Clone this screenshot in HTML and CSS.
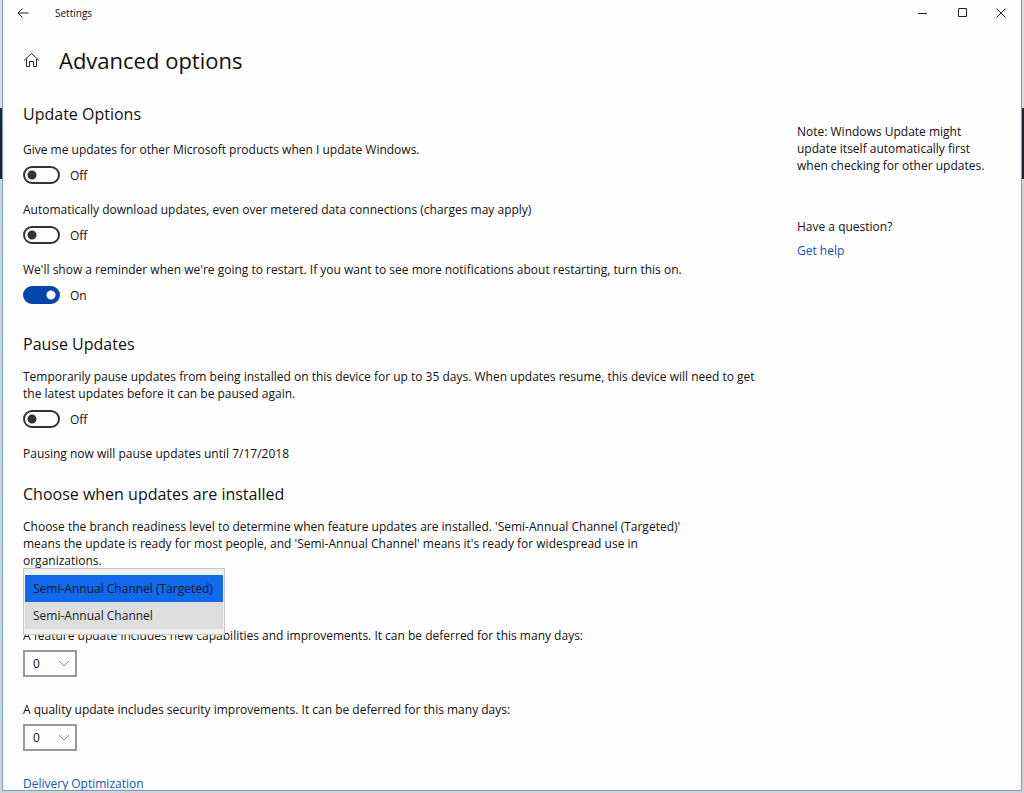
FILE: index.html
```html
<!DOCTYPE html>
<html lang="en">
<head>
<meta charset="utf-8">
<meta name="viewport" content="width=device-width, initial-scale=1">
<title>Settings</title>
<link rel="stylesheet" href="styles.css">
</head>
<body>
<div class="desktop">
  <div class="window">
    <header class="titlebar">
      <button class="back" aria-label="Back"><svg width="12" height="12" viewBox="0 0 12 12"><path d="M11.5 6H1M5.5 1.500L1 6l4.500 4.500"/></svg></button>
      <span class="app-name">Settings</span>
      <div class="controls">
        <button aria-label="Minimize"><svg width="10" height="10" viewBox="0 0 10 10"><path d="M0 5.500h9"/></svg></button>
        <button aria-label="Maximize"><svg width="10" height="10" viewBox="0 0 10 10"><path d="M1.500.5h8v8h-8z"/></svg></button>
        <button aria-label="Close"><svg width="10" height="10" viewBox="0 0 10 10"><path d="M.5.5l9 9M9.500.5l-9 9"/></svg></button>
      </div>
    </header>
    <div class="page-head">
      <button class="home" aria-label="Home"><svg width="17" height="16" viewBox="0 0 17 16"><path d="M1 8.500L8.500 1.500 16 8.500M3.500 7v7.500h3v-5h4v5h3V7"/></svg></button>
      <h1>Advanced options</h1>
    </div>
    <div class="columns">
      <main class="main">
        <section class="intro">
          <h2>Update Options</h2>
          <div class="setting">
            <label for="products">Give me updates for other Microsoft products when I update Windows.</label>
            <div class="toggle-row"><input class="toggle" type="checkbox" role="switch" id="products"><span>Off</span></div>
          </div>
          <div class="setting">
            <label for="metered">Automatically download updates, even over metered data connections (charges may apply)</label>
            <div class="toggle-row"><input class="toggle" type="checkbox" role="switch" id="metered"><span>Off</span></div>
          </div>
          <div class="setting">
            <label for="reminder">We'll show a reminder when we're going to restart. If you want to see more notifications about restarting, turn this on.</label>
            <div class="toggle-row"><input class="toggle" type="checkbox" role="switch" id="reminder" checked><span>On</span></div>
          </div>
        </section>
        <section>
          <h2>Pause Updates</h2>
          <div class="setting">
            <label for="pause">Temporarily pause updates from being installed on this device for up to 35 days. When updates resume, this device will need to get the latest updates before it can be paused again.</label>
            <div class="toggle-row"><input class="toggle" type="checkbox" role="switch" id="pause"><span>Off</span></div>
          </div>
          <p>Pausing now will pause updates until 7/17/2018</p>
        </section>
        <section>
          <h2>Choose when updates are installed</h2>
          <div class="branch">
            <label class="narrow" for="channel">Choose the branch readiness level to determine when feature updates are installed. 'Semi-Annual Channel (Targeted)' means the update is ready for most people, and 'Semi-Annual Channel' means it's ready for widespread use in organizations.</label>
            <select class="popup" id="channel" size="2">
              <option selected>Semi-Annual Channel (Targeted)</option>
              <option>Semi-Annual Channel</option>
            </select>
          </div>
          <div class="defer">
            <label for="feature">A feature update includes new capabilities and improvements. It can be deferred for this many days:</label>
            <div class="combo"><select id="feature"><option>0</option></select><svg width="12" height="8" viewBox="0 0 12 8"><path d="M1 1l5 5 5-5"/></svg></div>
          </div>
          <div class="defer">
            <label for="quality">A quality update includes security improvements. It can be deferred for this many days:</label>
            <div class="combo"><select id="quality"><option>0</option></select><svg width="12" height="8" viewBox="0 0 12 8"><path d="M1 1l5 5 5-5"/></svg></div>
          </div>
          <a href="#delivery">Delivery Optimization</a>
        </section>
      </main>
      <aside class="side">
        <p>Note: Windows Update might update itself automatically first when checking for other updates.</p>
        <div class="help">
          <p>Have a question?</p>
          <a href="#help">Get help</a>
        </div>
      </aside>
    </div>
  </div>
</div>
</body>
</html>
```
FILE: styles.css
```css
* { box-sizing: border-box; }
body {
  margin: 0;
  font: 12px/17px "Open Sans", "Noto Sans", sans-serif;
  color: #111;
}
h1, h2, p { margin: 0; font-weight: 400; }
button { border: 0; padding: 0; background: none; color: inherit; display: grid; place-items: center; }
svg { fill: none; stroke: #222; stroke-width: 1; }
a { color: #0f55c0; text-decoration: none; }
label { display: block; }

.desktop {
  height: 100vh;
  padding: 0 2px 2px;
  background: linear-gradient(#d9dde2 108px, #20242a 108px, #20242a 179px, #d2d3d3 179px);
}
.window {
  height: 100%;
  overflow: hidden;
  background: #fefefe;
  border: solid #6f9bd8;
  border-width: 0 1px 1px;
}

.titlebar { display: flex; align-items: center; height: 26px; padding-left: 14px; font-size: 10px; }
.back { width: 12px; height: 24px; }
.app-name { margin-left: 26px; }
.controls { display: flex; margin-left: auto; padding-right: 1px; }
.controls button { width: 39px; height: 26px; }

.page-head { display: flex; align-items: center; gap: 19px; height: 68px; padding-left: 20px; }
h1 { font-size: 22px; line-height: 32px; }

.columns { display: flex; padding-left: 20px; }
.main { flex: 1; max-width: 742px; min-width: 0; padding-top: 8px; }
.side { flex: none; width: 200px; margin-left: 32px; padding-top: 29px; }
.help { margin-top: 44px; display: grid; gap: 7px; }

section { margin-bottom: 20px; }
h2 { font-size: 16px; line-height: 24px; margin-bottom: 12px; }
.intro h2 { margin-bottom: 15px; }
.setting { margin-bottom: 17px; }
.setting:last-child { margin-bottom: 28px; }
.toggle-row { display: flex; align-items: center; gap: 10px; margin-top: 8px; }
.toggle {
  appearance: none;
  width: 37px;
  height: 18px;
  margin: 0;
  border: 2px solid #333;
  border-radius: 9px;
  background: radial-gradient(circle at 7px 7px, #333 4px, transparent 5px);
}
.toggle:checked {
  border-color: #0046ad;
  background: radial-gradient(circle at 26px 7px, #fff 4px, #0046ad 5px) border-box;
  background-origin: padding-box;
}

.branch { position: relative; margin-bottom: 58px; }
.narrow { max-width: 670px; }
.popup {
  position: absolute;
  top: 50px;
  left: 0;
  width: 202px;
  height: 67px;
  padding: 6px 1px;
  border: 1px solid #c8c8c8;
  border-radius: 0;
  background: #f0f0f0;
  font: inherit;
  overflow: hidden;
  outline: 0;
}
.popup option { height: 27px; padding: 5px 8px; line-height: 17px; color: #1c1c1c; background: #dedede; }
.popup option:checked { color: #101820; background: linear-gradient(#1169ee, #1169ee); }

.defer { margin-bottom: 24px; }
.combo { position: relative; width: 54px; margin-top: 6px; }
.combo select {
  appearance: none;
  display: block;
  width: 100%;
  height: 27px;
  padding: 0 8px;
  border: 2px solid #999;
  border-radius: 0;
  background: #fefefe;
  color: inherit;
  font: inherit;
}
.combo svg { position: absolute; right: 7px; top: 10px; stroke: #888; pointer-events: none; }
```
